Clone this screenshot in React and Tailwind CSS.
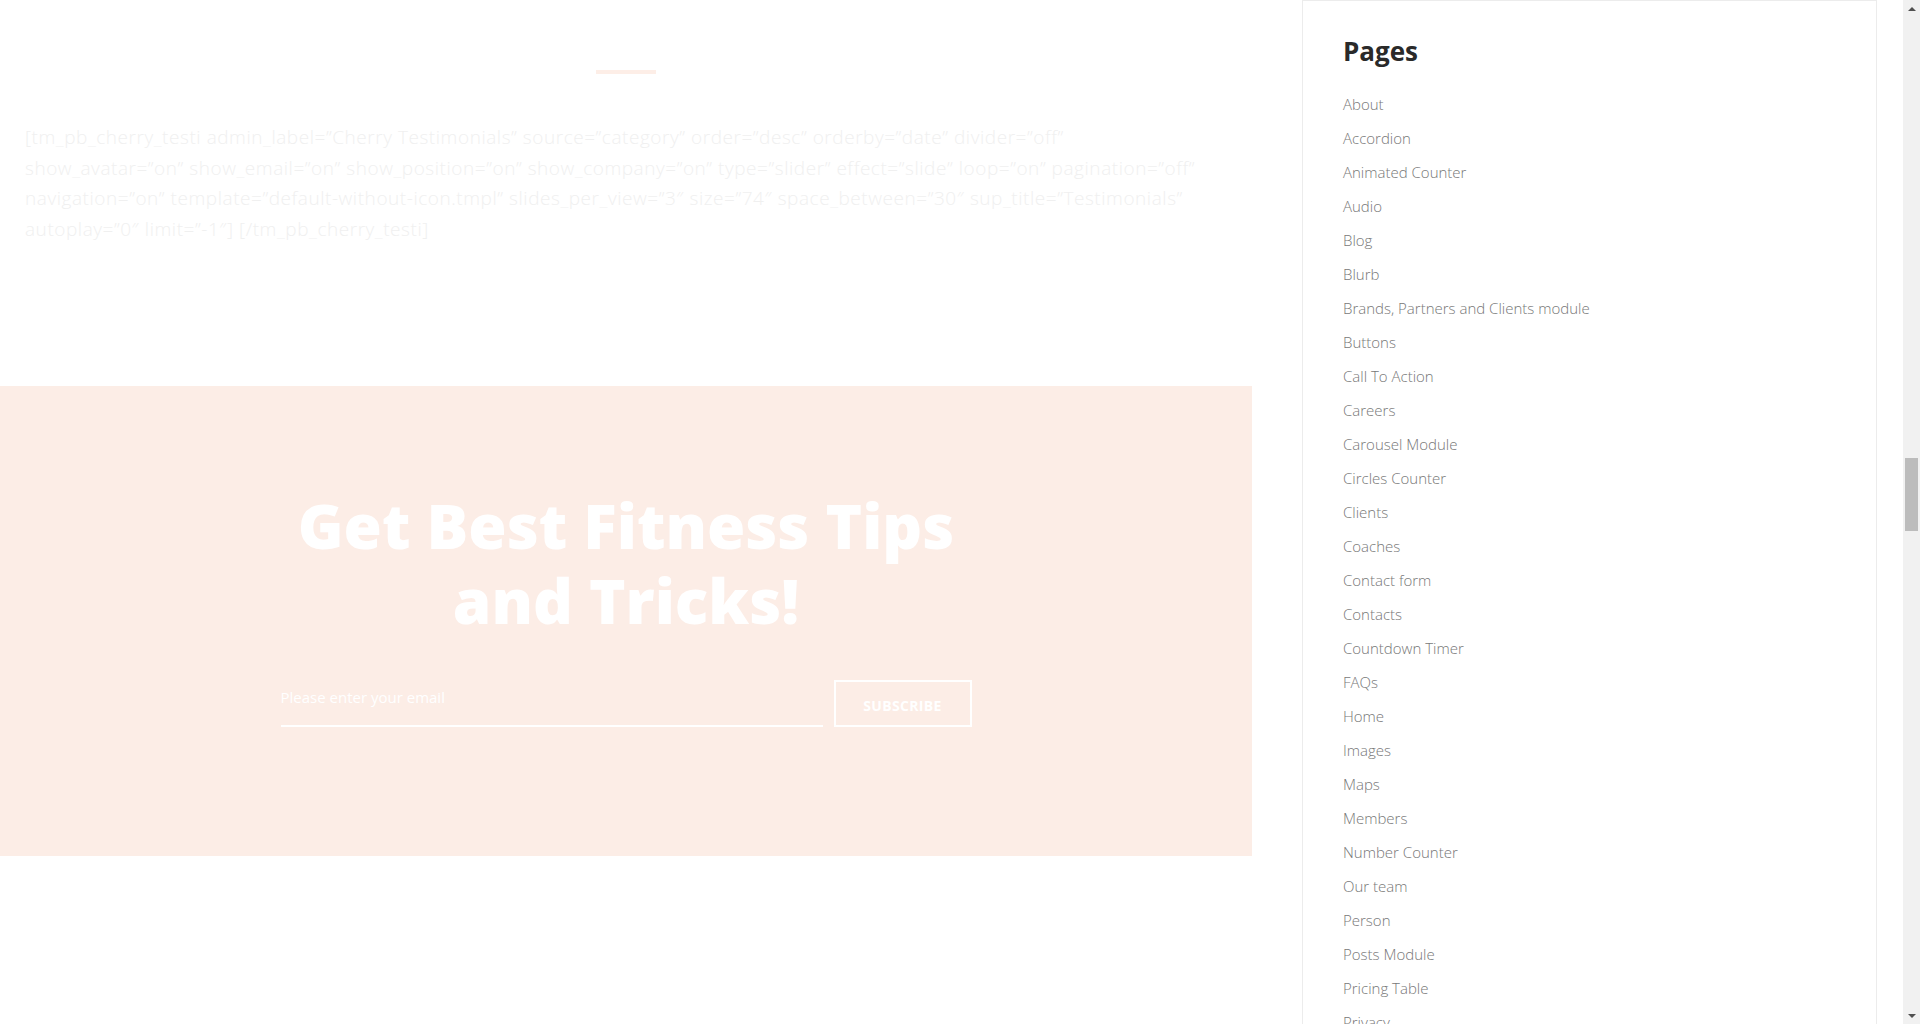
import React from 'react';

const pages = [
  'About', 'Accordion', 'Animated Counter', 'Audio', 'Blog', 'Blurb',
  'Brands, Partners and Clients module', 'Buttons', 'Call To Action', 'Careers',
  'Carousel Module', 'Circles Counter', 'Clients', 'Coaches', 'Contact form',
  'Contacts', 'Countdown Timer', 'FAQs', 'Home', 'Images', 'Maps', 'Members',
  'Number Counter', 'Our team', 'Person', 'Posts Module', 'Pricing Table', 'Privacy',
];

const shortcode = [
  '[tm_pb_cherry_testi admin_label=”Cherry Testimonials” source=”category” order=”desc” orderby=”date” divider=”off”',
  'show_avatar=”on” show_email=”on” show_position=”on” show_company=”on” type=”slider” effect=”slide” loop=”on” pagination=”off”',
  'navigation=”on” template=”default-without-icon.tmpl” slides_per_view=”3″ size=”74″ space_between=”30″ sup_title=”Testimonials”',
  'autoplay=”0″ limit=”-1″] [/tm_pb_cherry_testi]',
];

const App = () => {
  return (
    <div className="w-[1920px] h-[1024px] overflow-hidden flex bg-white font-['Open_Sans',sans-serif]">
      {/* Main content column */}
      <main className="w-[1252px] shrink-0 flex flex-col">
        <div className="pt-[70px] flex justify-center">
          <div className="w-[60px] h-[4px] bg-[#fdeee7]"></div>
        </div>

        <p className="mt-[48px] px-[25px] text-[19px] font-light tracking-[0.55px] leading-[30.6px] text-[#f0f0f0] whitespace-nowrap">
          {shortcode.map((line, i) => (
            <span key={i} className="block">{line}</span>
          ))}
        </p>

        {/* Newsletter */}
        <section className="mt-[142px] h-[470px] bg-[#fcede6] flex flex-col items-center pt-[102px]">
          <h2 className="text-white text-[62px] font-extrabold leading-[75px] text-center">
            Get Best Fitness Tips
            <br />
            and Tricks!
          </h2>
          <form className="mt-[42px] flex items-end gap-[11px]">
            <input
              type="text"
              placeholder="Please enter your email"
              className="w-[542px] h-[45px] bg-transparent border-b-2 border-white pb-[14px] text-[15px] text-white placeholder:text-white outline-none"
            />
            <button
              type="button"
              className="w-[138px] h-[47px] border-2 border-white text-white text-[14px] font-bold uppercase tracking-wide pt-[3px]"
            >
              Subscribe
            </button>
          </form>
        </section>
      </main>

      {/* Sidebar */}
      <aside className="ml-[50px] w-[575px] shrink-0 border border-[#ececec] pl-[40px] pt-[32px] h-[1100px]">
        <h3 className="text-[26px] font-bold leading-[36px] text-[#2a2a2a]">Pages</h3>
        <ul className="mt-[18px]">
          {pages.map((p) => (
            <li key={p} className="h-[34px] flex items-center text-[15px] font-light text-[#777777]">
              {p}
            </li>
          ))}
        </ul>
      </aside>

      {/* Scrollbar */}
      <div className="ml-[26px] w-[17px] shrink-0 bg-[#f1f1f1] flex flex-col">
        <div className="h-[17px] flex items-center justify-center">
          <div className="w-0 h-0 border-l-[4px] border-r-[4px] border-b-[4px] border-l-transparent border-r-transparent border-b-[#505050]"></div>
        </div>
        <div className="mt-[441px] mx-[2px] h-[73px] bg-[#bcbcbc]"></div>
        <div className="flex-1"></div>
        <div className="h-[17px] flex items-center justify-center">
          <div className="w-0 h-0 border-l-[4px] border-r-[4px] border-t-[4px] border-l-transparent border-r-transparent border-t-[#505050]"></div>
        </div>
      </div>
    </div>
  );
};

export default App;
